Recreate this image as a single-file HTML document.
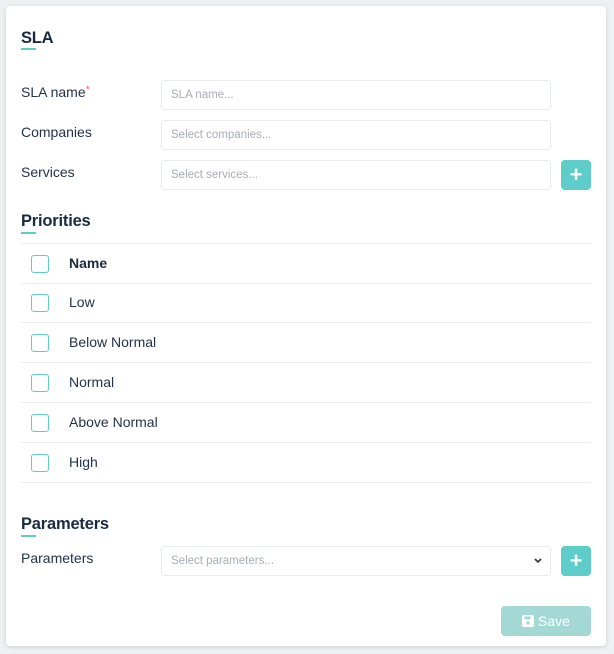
<!DOCTYPE html>
<html><head><style>
body{margin:0;width:614px;height:654px;background:#eef0f2;font-family:"Liberation Sans",sans-serif;color:#1f2d3d;position:relative;overflow:hidden}
.card{position:absolute;left:6px;top:6px;width:600px;height:640px;background:#fff;border-radius:4px;box-shadow:0 1px 4px rgba(0,0,0,.15)}
.a{position:absolute}
h3{position:absolute;margin:0;font-size:16.5px;font-weight:bold;color:#1a2a40;letter-spacing:-.2px}
.ul{position:absolute;width:15px;height:2px;background:#5ecdc9}
.lbl{position:absolute;font-size:14px;color:#23324a}
.inp{position:absolute;left:161px;width:388px;height:28px;border:1px solid #e8ecef;border-radius:3px;font-size:11.5px;color:#a6adb5;line-height:28px;padding-left:9px;box-sizing:content-box;width:379px}
.btn{position:absolute;left:561px;width:30px;height:30px;background:#5ecdc9;border-radius:4px;color:#fff;font-size:22px;line-height:29px;text-align:center;font-weight:bold}
.hr{position:absolute;left:21px;width:570px;height:1px;background:#e9edf0}
.cb{position:absolute;left:31px;width:16px;height:16px;border:1.5px solid #5ecdc9;border-radius:3px}
.rt{position:absolute;left:69px;font-size:14px;color:#23324a}
</style></head><body>
<div class="card"></div>
<h3 style="left:21px;top:29px">SLA</h3><div class="ul" style="left:21px;top:48px"></div>
<div class="lbl" style="left:21px;top:84px">SLA name<span style="color:#f06a7a;font-size:11px;vertical-align:top">*</span></div>
<div class="inp" style="top:80px">SLA name...</div>
<div class="lbl" style="left:21px;top:124px">Companies</div>
<div class="inp" style="top:120px">Select companies...</div>
<div class="lbl" style="left:21px;top:164px">Services</div>
<div class="inp" style="top:160px">Select services...</div>
<div class="btn" style="top:160px">+</div>
<h3 style="left:21px;top:212px">Priorities</h3><div class="ul" style="left:21px;top:232px"></div>
<div class="hr" style="top:243px"></div>
<div class="cb" style="top:255px"></div><div class="rt" style="top:255px;font-weight:bold;color:#1a2a40">Name</div>
<div class="hr" style="top:283px"></div>
<div class="cb" style="top:294px"></div><div class="rt" style="top:294px">Low</div>
<div class="hr" style="top:322px"></div>
<div class="cb" style="top:334px"></div><div class="rt" style="top:334px">Below Normal</div>
<div class="hr" style="top:362px"></div>
<div class="cb" style="top:374px"></div><div class="rt" style="top:374px">Normal</div>
<div class="hr" style="top:402px"></div>
<div class="cb" style="top:414px"></div><div class="rt" style="top:414px">Above Normal</div>
<div class="hr" style="top:442px"></div>
<div class="cb" style="top:454px"></div><div class="rt" style="top:454px">High</div>
<div class="hr" style="top:482px"></div>
<h3 style="left:21px;top:515px">Parameters</h3><div class="ul" style="left:21px;top:535px"></div>
<div class="lbl" style="left:21px;top:550px">Parameters</div>
<div class="inp" style="top:546px">Select parameters...<svg class="a" style="right:8px;top:11px" width="8" height="6" viewBox="0 0 8 6"><path d="M1 1l3 3 3-3" stroke="#333" stroke-width="1.6" fill="none"/></svg></div>
<div class="btn" style="top:546px">+</div>
<div class="a" style="left:501px;top:606px;width:90px;height:30px;background:#a3d8d5;border-radius:4px;color:#fff;font-size:14px;line-height:30px;text-align:center"><svg width="12" height="12" viewBox="0 0 12 12" style="vertical-align:-1px"><rect x="0" y="0" width="12" height="12" rx="2" fill="#fff"/><rect x="2.5" y="1.5" width="6" height="3" fill="#a3d8d5"/><circle cx="6" cy="8" r="1.7" fill="#a3d8d5"/></svg> Save</div>
</body></html>
